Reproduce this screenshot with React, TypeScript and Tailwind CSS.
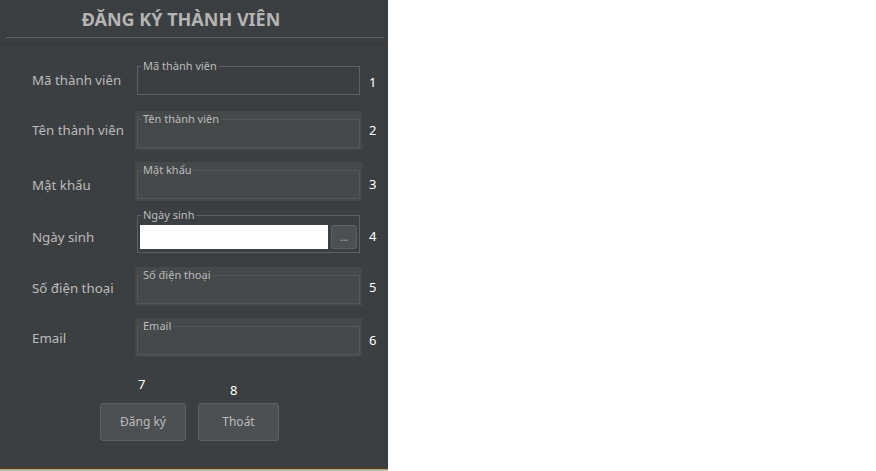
import React from "react";

function Legend({ children }: { children: React.ReactNode }) {
  return (
    <legend className="ml-[3px] px-[2px] text-[11px] leading-[14px] text-[#bbbbbb]">{children}</legend>
  );
}

export default function App() {
  return (
    <div className="w-[876px] h-[471px] bg-white flex font-['Noto_Sans','Open_Sans',sans-serif]">
      <div className="w-[388px] h-full flex flex-col bg-[#3c3f41]">
        {/* header */}
        <div className="h-[45px] border-b border-[#37393b] flex flex-col">
          <div className="h-[37px] flex items-center justify-center pr-[26px]">
            <span className="text-[18px] font-bold text-[#b4b4b4] leading-none">ĐĂNG KÝ THÀNH VIÊN</span>
          </div>
          <div className="ml-[6px] mr-[4px] h-px bg-[#5d6164]" />
        </div>

        {/* row 1 */}
        <div className="flex items-start mt-[13px]">
          <div className="w-[135px] pl-[32px] pt-[13px] text-[13.3px] leading-[18px] text-[#bbbbbb]">Mã thành viên</div>
          <div className="w-[227px] h-[39px] px-[2px] pt-[1px]">
            <fieldset className="border border-[#5e6163]">
              <Legend>Mã thành viên</Legend>
              <div className="h-[21px]" />
            </fieldset>
          </div>
          <div className="ml-[7px] pt-[16px] text-[13px] leading-[16px] text-white">1</div>
        </div>

        {/* row 2 */}
        <div className="flex items-start mt-[14px]">
          <div className="w-[135px] pl-[32px] pt-[10px] text-[13.3px] leading-[18px] text-[#bbbbbb]">Tên thành viên</div>
          <div className="w-[227px] h-[39px] px-[2px] pt-[1px] bg-[#45494a]">
            <fieldset className="border border-[#53575a]">
              <Legend>Tên thành viên</Legend>
              <div className="h-[21px]" />
            </fieldset>
          </div>
          <div className="ml-[7px] pt-[11px] text-[13px] leading-[16px] text-white">2</div>
        </div>

        {/* row 3 */}
        <div className="flex items-start mt-[12px]">
          <div className="w-[135px] pl-[32px] pt-[14px] text-[13.3px] leading-[18px] text-[#bbbbbb]">Mật khẩu</div>
          <div className="w-[227px] h-[39px] px-[2px] pt-[1px] bg-[#45494a]">
            <fieldset className="border border-[#53575a]">
              <Legend>Mật khẩu</Legend>
              <div className="h-[21px]" />
            </fieldset>
          </div>
          <div className="ml-[7px] pt-[14px] text-[13px] leading-[16px] text-white">3</div>
        </div>

        {/* row 4 */}
        <div className="flex items-start mt-[6px]">
          <div className="w-[135px] pl-[32px] pt-[21px] text-[13.3px] leading-[18px] text-[#bbbbbb]">Ngày sinh</div>
          <div className="w-[227px] h-[48px] px-[2px] pt-[1px]">
            <fieldset className="border border-[#5e6163]">
              <Legend>Ngày sinh</Legend>
              <div className="flex gap-[3px] pl-[2px] pr-[2px] pt-[3px] pb-[3px]">
                <div className="w-[188px] h-[24px] bg-white" />
                <button className="w-[26px] h-[24px] rounded-[3px] border border-[#5e6060] bg-[#4c5052] text-[10px] leading-none text-[#bbbbbb] flex items-end justify-center pb-[6px]">
                  ...
                </button>
              </div>
            </fieldset>
          </div>
          <div className="ml-[7px] pt-[21px] text-[13px] leading-[16px] text-white">4</div>
        </div>

        {/* row 5 */}
        <div className="flex items-start mt-[12px]">
          <div className="w-[135px] pl-[32px] pt-[12px] text-[13.3px] leading-[18px] text-[#bbbbbb]">Số điện thoại</div>
          <div className="w-[227px] h-[39px] px-[2px] pt-[1px] bg-[#45494a]">
            <fieldset className="border border-[#53575a]">
              <Legend>Số điện thoại</Legend>
              <div className="h-[21px]" />
            </fieldset>
          </div>
          <div className="ml-[7px] pt-[12px] text-[13px] leading-[16px] text-white">5</div>
        </div>

        {/* row 6 */}
        <div className="flex items-start mt-[12px]">
          <div className="w-[135px] pl-[32px] pt-[11px] text-[13.3px] leading-[18px] text-[#bbbbbb]">Email</div>
          <div className="w-[227px] h-[39px] px-[2px] pt-[1px] bg-[#45494a]">
            <fieldset className="border border-[#53575a]">
              <Legend>Email</Legend>
              <div className="h-[21px]" />
            </fieldset>
          </div>
          <div className="ml-[7px] pt-[14px] text-[13px] leading-[16px] text-white">6</div>
        </div>

        {/* buttons */}
        <div className="flex items-end gap-[12px] pl-[100px] mt-[19px]">
          <div className="w-[86px] flex flex-col">
            <div className="pl-[38px] text-[13px] leading-[16px] text-white">7</div>
            <button className="mt-[11px] h-[38px] rounded-[3px] border border-[#5e6060] bg-[#4c5052] text-[12px] text-[#bbbbbb]">
              Đăng ký
            </button>
          </div>
          <div className="w-[81px] flex flex-col">
            <div className="pl-[32px] text-[13px] leading-[16px] text-white">8</div>
            <button className="mt-[5px] h-[38px] rounded-[3px] border border-[#5e6060] bg-[#4c5052] text-[12px] text-[#bbbbbb]">
              Thoát
            </button>
          </div>
        </div>

        <div className="flex-1" />
        <div className="h-px bg-[#e6a03a]" />
        <div className="h-px bg-[#a9bfd6]" />
      </div>
    </div>
  );
}
